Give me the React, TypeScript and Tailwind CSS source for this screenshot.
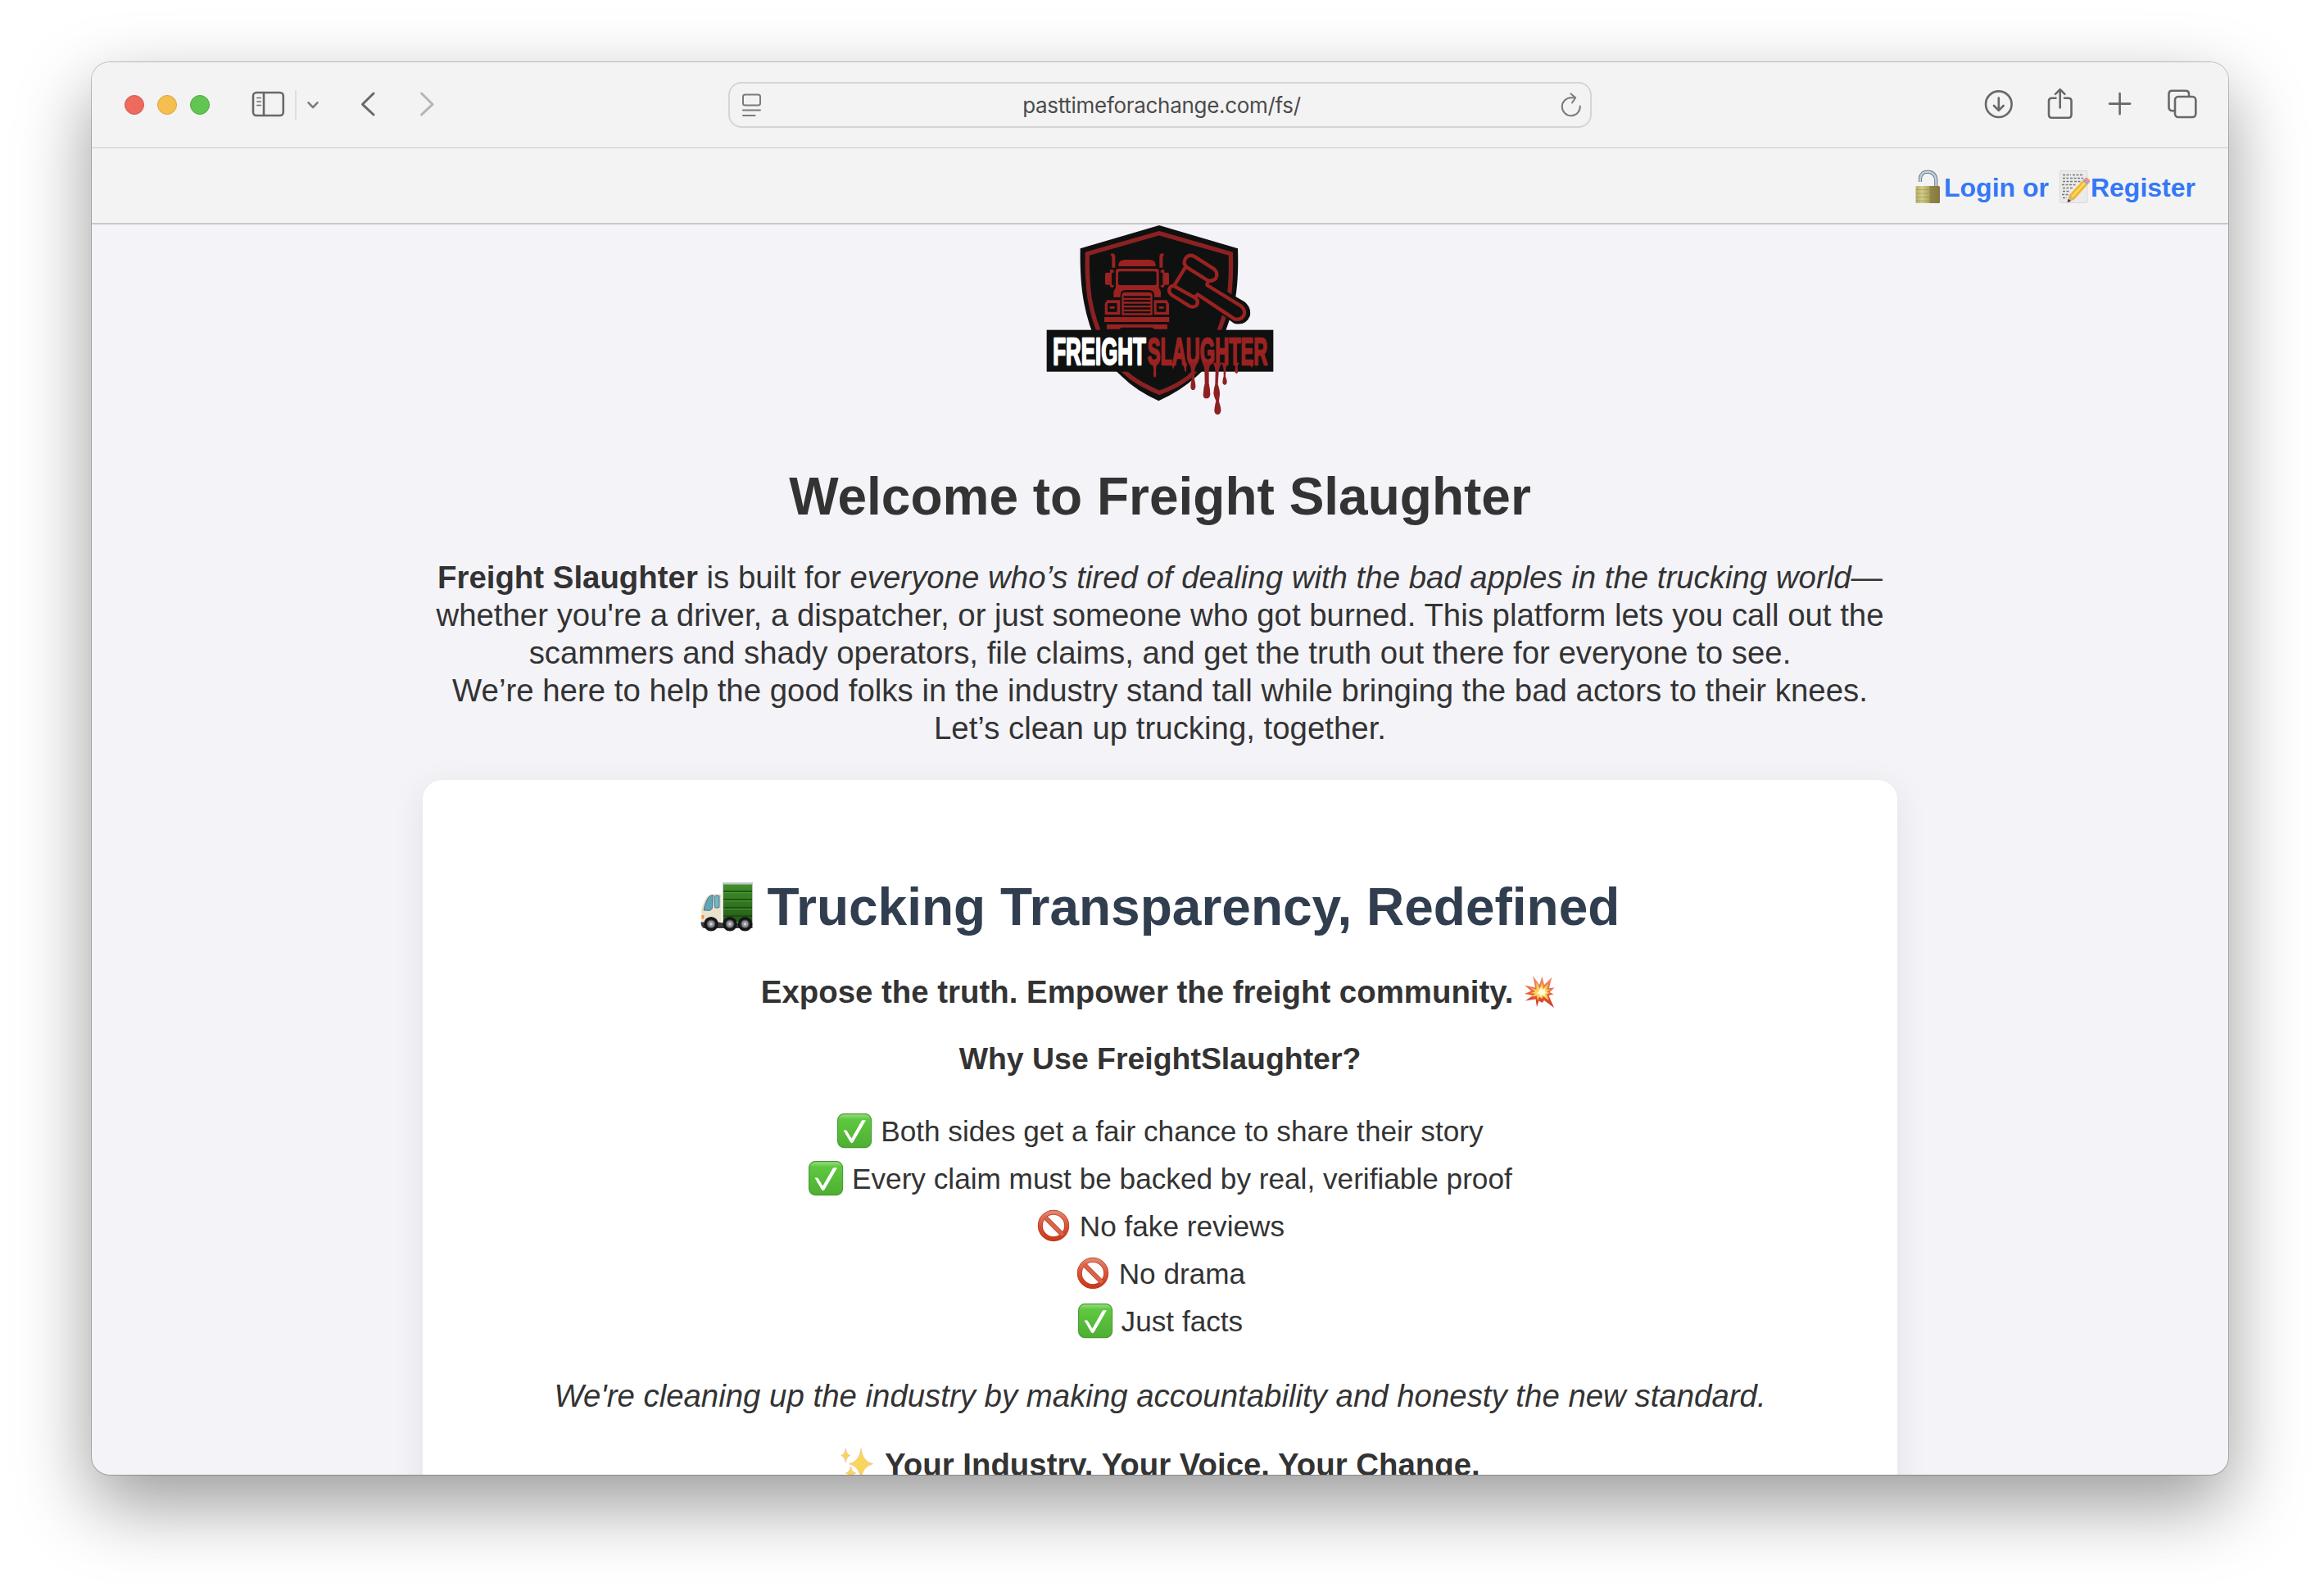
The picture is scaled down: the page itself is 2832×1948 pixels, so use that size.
import type { ReactNode } from "react";

const stroke = {
  fill: "none",
  stroke: "#686868",
  strokeWidth: 2.6,
  strokeLinecap: "round" as const,
  strokeLinejoin: "round" as const,
};

function Toolbar() {
  return (
    <div className="flex h-[105px] shrink-0 items-start border-b border-[#c9c9c9] bg-[#f3f3f3]">
      <div className="flex w-[777px] items-start pl-10 pt-10">
        <div className="flex gap-4">
          <span className="size-6 rounded-full border border-[#d9564b] bg-[#ec6a5e]" />
          <span className="size-6 rounded-full border border-[#dba13c] bg-[#f4bf4f]" />
          <span className="size-6 rounded-full border border-[#4caa3c] bg-[#61c554]" />
        </div>
        <svg className="-mt-3 ml-12 h-12 w-[232px]" viewBox="304 104 232 48" {...stroke}>
          <rect x="309" y="113" width="36.8" height="28" rx="4" />
          <path d="M322 113V141" />
          <path d="M314 119.5h4.2M314 124h4.2M314 128.5h4.2" strokeWidth="1.7" />
          <path d="M361 110V146" stroke="#dedede" strokeWidth="2" strokeLinecap="butt" />
          <path d="M376.5 125.3l5.5 5.7 5.5-5.7" stroke="#7d7d80" />
          <path d="M456 114L442.5 127.3 456 140" strokeWidth="3" />
          <path d="M514.5 114L528 127.3 514.5 140" stroke="#b5b5b5" strokeWidth="3" />
        </svg>
      </div>
      <div className="mt-6 flex h-14 w-[1054px] items-center justify-between rounded-2xl border-2 border-[#d5d5d5] pl-[11px] pr-[7px]">
        <svg className="h-8 w-8" viewBox="902 112 32 32" {...stroke} stroke="#7b7b7b" strokeWidth="2">
          <rect x="907" y="115.5" width="21" height="13" rx="2.5" />
          <path d="M907 134.5H928M907 141H921.5" />
        </svg>
        <span className="mt-0.5 font-['Inter'] text-[26px] leading-8 tracking-[-0.3px] text-[#4b4b4b]">
          pasttimeforachange.com/fs/
        </span>
        <svg className="h-8 w-8" viewBox="1902 112 32 32" {...stroke} stroke="#7b7b7b" strokeWidth="2">
          <path d="M1928.800 129.500a11 11 0 1 1-11-10.300h4.500" />
          <path d="M1917.500 114.500l5.700 4.700-4.200 6.300" />
        </svg>
      </div>
      <svg className="ml-auto mr-9 mt-6 h-12 w-[266px]" viewBox="2418 100 266 48" {...stroke}>
        <circle cx="2439.8" cy="127.2" r="15.8" />
        <path d="M2439.8 119.5V134.5M2434 129l5.8 5.8 5.8-5.8" />
        <path d="M2509.5 119.8h-5q-3.5 0-3.5 3.5V140q0 3.8 3.5 3.8h20.500q3.500 0 3.500-3.800V123.300q0-3.500-3.500-3.500h-5" />
        <path d="M2514.700 131.500V109.500M2509 114.800l5.700-5.700 5.700 5.700" />
        <path d="M2575 126.600H2600.200M2587.600 114V139.200" />
        <path d="M2654 135.300h-2.500q-4-.5-4-4.500V114.800q0-4 4-4h16.500q4 0 4 4v2.500" />
        <rect x="2655" y="118" width="25.300" height="25" rx="4" />
      </svg>
    </div>
  );
}

function LockEmoji() {
  return (
    <svg className="h-[42px] w-[42px] shrink-0" viewBox="0 0 42 42">
      <defs>
        <linearGradient id="lockBody" x1="0" x2="1">
          <stop offset="0" stopColor="#b1ac68" />
          <stop offset=".25" stopColor="#d2ce8a" />
          <stop offset=".55" stopColor="#b0a75f" />
          <stop offset=".6" stopColor="#93884b" />
          <stop offset="1" stopColor="#857540" />
        </linearGradient>
      </defs>
      <path d="M13 15V11.500Q13.500 2.700 22 2.600q10 .4 10.300 11V22" fill="none" stroke="#77797a" strokeWidth="4.200" />
      <path d="M13 15V11.500Q13.500 2.700 22 2.600q10 .4 10.300 11V22" fill="none" stroke="#bcd3ea" strokeWidth="2.200" />
      <rect x="7.500" y="20" width="29.500" height="21" rx="1.500" fill="url(#lockBody)" />
      <path d="M8 24.500H36.500M8 29H36.500M8 33.500H36.500M8 38H36.500" stroke="#8b8148" strokeOpacity=".45" strokeWidth="1" />
    </svg>
  );
}

function MemoEmoji() {
  return (
    <svg className="h-[42px] w-[42px] shrink-0" viewBox="0 0 42 42">
      <rect x="4.500" y="1.500" width="33.500" height="39" rx="1" fill="#ebebeb" stroke="#d4d4d4" strokeWidth=".8" />
      <path
        d="M8 6.500h10M20 6.500h13M8 10.500h7M17 10.500h16M8 14.500h12M22 14.500h8M7 18.500h17M8 22.500h12M8 26.500h9M7 30.500h9M8 34.500h5"
        stroke="#767676"
        strokeWidth="1.300"
        strokeDasharray="3 1.500"
      />
      <path d="M16 31L32 13.500l6 5L22 36.500l-8 3z" fill="#f3b52b" />
      <path d="M19 33.500L35 16" stroke="#fbdc68" strokeWidth="2.500" />
      <path d="M16 31l6 5.500-8 3z" fill="#d9b27f" />
      <path d="M14.800 35.800l3.200 2.700-4.500 1.500z" fill="#333" />
      <path d="M32 13.500l2-2.100 6 5-2 2.200z" fill="#9ca7ad" />
      <path d="M34 11.400l1-1.200q1.500-1 3.200.4l2.400 2q1.200 1.400.2 2.700l-.8 1.100z" fill="#ee8f8c" />
    </svg>
  );
}

function TruckEmoji() {
  return (
    <svg className="h-16 w-16 shrink-0" viewBox="0 0 64 64">
      <defs>
        <linearGradient id="cargo" x1="0" x2="0" y1="0" y2="1">
          <stop offset="0" stopColor="#41902b" />
          <stop offset="1" stopColor="#235b18" />
        </linearGradient>
      </defs>
      <rect x="27" y="2" width="37" height="50" fill="#c2c5cd" />
      <rect x="28" y="4.500" width="35" height="46" fill="url(#cargo)" />
      <path d="M28 13h35M28 23h35M28 33h35M28 43h35" stroke="#174710" strokeWidth="1.500" />
      <path d="M28 14.600h35M28 24.600h35M28 34.600h35" stroke="#55a83a" strokeWidth=".8" />
      <path d="M1 51V37Q2 29 7 21q3-4.500 8-4.500h10.500v34.500z" fill="#eae2cc" />
      <path d="M4 36Q6 25 10.500 19.500q2-2 5-1.900l-.6 13q0 4-3 5.700z" fill="#5ea6bb" stroke="#42606a" strokeWidth=".8" />
      <rect x="17.500" y="18" width="5.500" height="15" rx="1" fill="#71b7c9" stroke="#42606a" strokeWidth=".8" />
      <rect x="1.500" y="42" width="2.800" height="4.500" fill="#f2913a" />
      <path d="M.5 50.500h21.500l5 1h36.500v6.500H4q-3.500-2-3.500-7.500z" fill="#3b3b3d" />
      {[13, 36, 54.5].map((x) => (
        <g key={x}>
          <circle cx={x} cy="52.800" r="8.800" fill="#151515" />
          <circle cx={x} cy="52.800" r="5.300" fill="#55585c" />
          <circle cx={x} cy="52.800" r="3.700" fill="#97999c" />
          <circle cx={x} cy="52.800" r="1.600" fill="#d6d8da" />
        </g>
      ))}
    </svg>
  );
}

function BoomEmoji() {
  return (
    <svg className="h-[44px] w-[45px] shrink-0" viewBox="-1.500 0 45 44">
      <defs>
        <linearGradient id="boom" x1="0" x2="0" y1="0" y2="1">
          <stop offset="0" stopColor="#ee9b78" />
          <stop offset=".55" stopColor="#e5633c" />
          <stop offset="1" stopColor="#cf2f22" />
        </linearGradient>
      </defs>
      <path
        d="M11.500 2.500L19.500 14 23 3.500l2.500 10.500L35 4.500l-3.500 13.500 6.500-.5-6 5.500 5 2.500-6 1.500 6.500 15-12-9-2.500 3-4-2.500L16.500 41l-1.500-9.500L2.500 33.500l9-6.500L1.500 25l8-3.500L1.500 14.500l13 3z"
        fill="url(#boom)"
      />
      <path
        d="M16 11l4 7.500 3-6.500 1.500 6.500 5.500-5.500-1.500 7 4.500-.5-4 3 3 1.500-3.500 1.500 2.500 7.500-6.500-5-2 3-3-2.500-2 4.500-1-5.500-7 1 5-3.500-5-1 5-2L9 18l7 2z"
        fill="#fbd455"
      />
      <path d="M19.500 20.500l2.500-4 1.500 4 3.500-2-1 3.500 2.500 1.500-2.500 1 .5 3-3.500-1.500-2.500 2.500-1-3.500-4-.5 3-2z" fill="#fffbe0" />
    </svg>
  );
}

function CheckEmoji() {
  return (
    <svg className="h-11 w-11 shrink-0" viewBox="0 0 44 44">
      <defs>
        <linearGradient id="chk" x1="0" x2="0" y1="0" y2="1">
          <stop offset="0" stopColor="#a0dc8c" />
          <stop offset=".16" stopColor="#5ec83f" />
          <stop offset="1" stopColor="#4fae33" />
        </linearGradient>
      </defs>
      <rect x="1.600" y="1.600" width="41" height="41" rx="7.500" fill="url(#chk)" stroke="#469a30" strokeWidth="1.100" />
      <path d="M8.500 21.500h3.200q.9 0 1.300 1l5.400 9L30.500 10.200q.5-.9 1.500-.9h4L20.800 35.600q-1 1.700-2.200 1.700-1 0-2-1.700z" fill="#fff" />
    </svg>
  );
}

function NoEmoji() {
  return (
    <svg className="h-11 w-11 shrink-0" viewBox="0 0 44 44">
      <defs>
        <linearGradient id="ban" x1="0" x2="0" y1="0" y2="1">
          <stop offset="0" stopColor="#e2836b" />
          <stop offset=".5" stopColor="#d95336" />
          <stop offset="1" stopColor="#cb3a1d" />
        </linearGradient>
      </defs>
      <g fill="none">
        <path d="M10.500 10.500L33.500 33.500" stroke="#b43a22" strokeWidth="5.600" />
        <circle cx="22" cy="22" r="16.200" stroke="#b53a22" strokeWidth="6" />
        <circle cx="22" cy="22" r="16.200" stroke="url(#ban)" strokeWidth="4.600" />
        <path d="M10.500 10.500L33.500 33.500" stroke="#db6448" strokeWidth="4" />
      </g>
    </svg>
  );
}

function SparklesEmoji() {
  return (
    <svg className="h-11 w-11 shrink-0" viewBox="0 0 44 44" fill="#f7d65c" stroke="#f3b88a" strokeWidth=".7">
      <path d="M26 2Q27.800 18 40.500 20.700 27.800 23.400 26 39.500 24.200 23.400 11.500 20.700 24.200 18 26 2z" />
      <path d="M7.300 2Q8.300 9.300 12.800 10.600 8.300 11.900 7.300 19 6.300 11.900 1.800 10.600 6.300 9.300 7.300 2z" />
      <path d="M13.500 24Q14.600 30.500 19.500 32 14.600 33.500 13.500 40 12.400 33.500 7.500 32 12.400 30.500 13.500 24z" />
    </svg>
  );
}

const INK = "#0f1110";
const RED = "#9a2221";

function Logo() {
  return (
    <svg className="mr-0.5 h-[246px] w-[310px]" viewBox="0 42 930 738">
      <path
        d="M465 45L753 130Q757 250 741 330 722 400 690 480 650 560 600 600 545 650 463 688 380 650 330 600 270 550 238 480 205 410 190 330 174 250 176 130z"
        fill={INK}
      />
      <path
        d="M464 74L727 149Q730 240 720 315 700 400 665 475 620 560 575 600 530 635 466 658 400 630 360 600 300 555 262 475 225 400 210 310 200 240 202 149z"
        fill="none"
        stroke="#8a2122"
        strokeWidth="16"
      />

      <g fill={RED}>
        <path d="M289 148q14-1 15 10v42h-12v-36q0-6-4-9zM481 148q-14-1-15 10v42h12v-36q0-6 4-9z" />
        <path d="M316 195v-6q2-18 24-18h90q20 0 22 18v6z" />
        <path d="M285 208q14-4 14 6v4h-8v46h8q0 12-14 7v-8h-13q-5 0-5-4v-35q0-6 6-6h12zM484 208q-14-4-14 6v4h8v46h-8q0 12 14 7v-8h12q5 0 5-4v-35q0-6-6-6h-11z" />
        <path d="M298 308v-20l8-16v-60q0-8 10-8h138q10 0 10 8v60l7 16v20h-24v-8q0-18-20-18h-84q-20 0-20 18v8z" />
        <path d="M328 374v-72q0-12 12-12h88q12 0 12 12v72z" />
        <path d="M266 372v-40l8-13h48v53zM501 372v-40l-8-13h-47v53zM264 381h238v18H264zM273 408h222v17h-48l-7-6H326l-7 6h-46z" />
      </g>
      <g fill={INK}>
        <rect x="315" y="214" width="140" height="50" rx="7" />
        <rect x="276" y="330" width="35" height="32" rx="3" />
        <rect x="455" y="330" width="35" height="32" rx="3" />
        <path d="M335 304h98v7h-98zM335 318h98v7h-98zM335 332h98v7h-98zM335 346h98v7h-98zM335 360h98v7h-98z" />
      </g>
      <path d="M284 342h18v8h-18zM464 342h18v8h-18z" fill={RED} />

      <g strokeLinejoin="round">
        <path
          d="M640 263l130 75q16 14 13 34-8 22-36 19L618 298z"
          fill={INK}
          stroke={INK}
          strokeWidth="30"
        />
        <path d="M596 195l42 28-28 56-50 20-36-34 42-68z" fill={INK} />
        <path
          d="M563 195L520 266L577 309Q600 310 606 298L741 388Q767 394 777 370 780 353 764 340L640 264 645 243"
          fill={INK}
          stroke={RED}
          strokeWidth="13"
        />
        <path
          d="M592 158L666 205Q683 220 672 240 659 253 641 246L567 199Q550 186 562 165 574 150 592 158z"
          fill={INK}
          stroke={RED}
          strokeWidth="13"
        />
        <path
          d="M521 268L597 311Q612 322 601 339 592 347 576 341L511 300Q496 288 504 273 511 264 521 268z"
          fill={INK}
          stroke={RED}
          strokeWidth="13"
        />
      </g>

      <rect x="53" y="428" width="830" height="153" fill={INK} />
      <g fontFamily="'Liberation Sans', sans-serif" fontWeight="700" fontSize="139" strokeLinejoin="round">
        <text x="76" y="554" fill="#fff" stroke="#fff" strokeWidth="7" textLength="340" lengthAdjust="spacingAndGlyphs">
          FREIGHT
        </text>
        <text x="422" y="554" fill={RED} stroke={RED} strokeWidth="7" textLength="440" lengthAdjust="spacingAndGlyphs">
          SLAUGHTER
        </text>
      </g>
      <g fill="#8f2022">
        <path d="M436 548h22q-4 12-5 25l1 20q-1 9-5 9t-5-9l1-20q-1-15-9-25z" fill={RED} />
        <path d="M546 550h22q-5 12-4 30h-6q2-15-12-30z" fill={RED} />
        <path d="M572 548h34q-10 14-12 35l0 25q5 20 4 30-2 10-9 10t-9-10q0-14 4-30l-1-25q-1-22-11-35z" />
        <path d="M622 548h34q-9 14-9 30l0 45q5 22 5 42-2 14-14 14t-12-14q1-24 6-42l-1-45q0-18-9-30z" />
        <path d="M662 548h34q-12 14-13 34l-3 45q8 24 7 38-2 12-3 25 9 26 7 36-3 12-12 12t-12-12q0-14 6-38-8-16-9-28 1-20 6-33l1-45q0-18-9-34z" />
        <path d="M692 548h26q-9 12-9 30l-1 20q6 14 5 24-3 8-8 8t-8-8q0-12 4-24l0-20q0-18-9-30z" />
        <path d="M738 548h20q-6 8-6 18l2 14q-1 8-6 8t-6-8l2-14q0-10-6-18z" fill={RED} />
        <path d="M510 550h14q-4 8-7 22-5-10-7-22zM796 550h14q-2 10-6 17-6-7-8-17zM848 550h16q-2 6-6 10-8-4-10-10z" fill={RED} />
      </g>
    </svg>
  );
}

function Item({ icon, children }: { icon: ReactNode; children: ReactNode }) {
  return (
    <li className="flex h-[58px] items-center justify-center gap-[9.800px]">
      {icon}
      <span className="pt-px">{children}</span>
    </li>
  );
}

export default function App() {
  return (
    <div className="h-[1948px] w-[2832px] overflow-hidden bg-white px-28 pt-[76px] font-['Liberation_Sans',Arial,sans-serif] text-[#333]">
      <div className="flex h-[1724px] w-[2608px] flex-col overflow-hidden rounded-[22px] bg-[#f4f3f8] shadow-[0_0_0_1px_rgba(0,0,0,0.22),0_36px_90px_rgba(0,0,0,0.4)]">
        <Toolbar />
        <nav className="flex h-[93px] shrink-0 items-center justify-end border-b-2 border-[#c9c9cb] bg-[#f3f3f3] pr-10 pt-[3px] text-[32px] font-bold leading-9 text-[#3478f6]">
          <LockEmoji />
          <span className="mr-[9px] pt-0.5">Login or</span>
          <MemoEmoji />
          <span className="pt-0.5">Register</span>
        </nav>
        <main className="flex flex-col items-center">
          <Logo />
          <h1 className="mt-[50px] text-[64px] font-bold leading-[72px]">Welcome to Freight Slaughter</h1>
          <p className="mt-10 whitespace-nowrap text-center text-[38.400px] leading-[46px]">
            <strong>Freight Slaughter</strong> is built for{" "}
            <em>everyone who’s tired of dealing with the bad apples in the trucking world</em>—
            <br />
            whether you're a driver, a dispatcher, or just someone who got burned. This platform lets you call out the
            <br />
            scammers and shady operators, file claims, and get the truth out there for everyone to see.
            <br />
            We’re here to help the good folks in the industry stand tall while bringing the bad actors to their knees.
            <br />
            Let’s clean up trucking, together.
          </p>
          <section className="mt-10 flex h-[1000px] w-[1800px] shrink-0 flex-col items-center rounded-3xl bg-white pt-[119px] shadow-[0_8px_40px_rgba(0,0,0,0.08)]">
            <h2 className="flex h-[72px] items-center gap-[17.800px] text-[64px] font-bold leading-[72px] text-[#303e4f]">
              <TruckEmoji />
              <span>Trucking Transparency, Redefined</span>
            </h2>
            <p className="mt-11 flex h-[46px] items-center gap-[10.700px] text-[38.400px] font-bold leading-[46px]">
              <span className="pt-0.5">Expose the truth. Empower the freight community.</span>
              <BoomEmoji />
            </p>
            <h3 className="mt-[37px] text-[37.440px] font-bold leading-[44px]">Why Use FreightSlaughter?</h3>
            <ul className="mt-[37px] text-[35.200px] leading-[58px]">
              <Item icon={<CheckEmoji />}>Both sides get a fair chance to share their story</Item>
              <Item icon={<CheckEmoji />}>Every claim must be backed by real, verifiable proof</Item>
              <Item icon={<NoEmoji />}>No fake reviews</Item>
              <Item icon={<NoEmoji />}>No drama</Item>
              <Item icon={<CheckEmoji />}>Just facts</Item>
            </ul>
            <p className="mt-10 text-[38.400px] italic leading-[46px]">
              We're cleaning up the industry by making accountability and honesty the new standard.
            </p>
            <p className="mt-[38px] flex h-[46px] items-center gap-[10.700px] text-[38.400px] font-bold leading-[46px]">
              <SparklesEmoji />
              <span>Your Industry. Your Voice. Your Change.</span>
            </p>
          </section>
        </main>
      </div>
    </div>
  );
}
